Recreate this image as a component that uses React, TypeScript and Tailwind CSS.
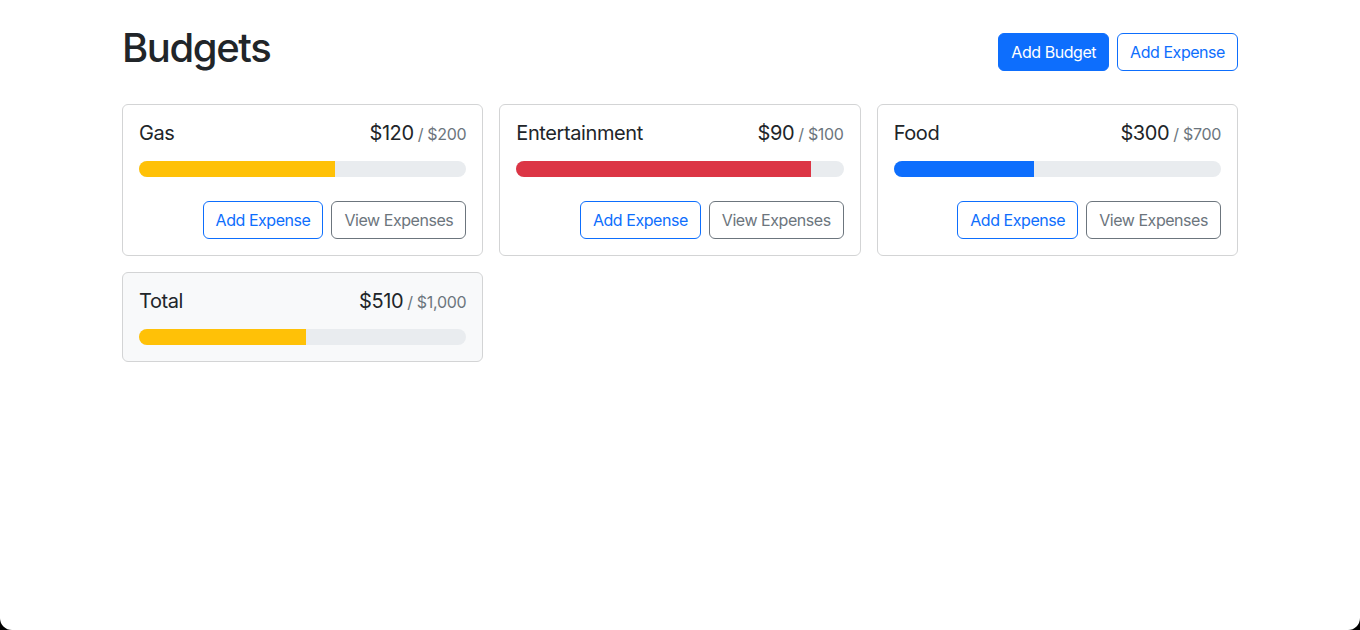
import React from "react";

type Budget = { name: string; amount: number; max: number };

const budgets: Budget[] = [
  { name: "Gas", amount: 120, max: 200 },
  { name: "Entertainment", amount: 90, max: 100 },
  { name: "Food", amount: 300, max: 700 },
];

const fmt = (n: number) => "$" + n.toLocaleString("en-US");

function barColor(ratio: number) {
  if (ratio < 0.5) return "bg-[#0d6efd]";
  if (ratio < 0.75) return "bg-[#ffc107]";
  return "bg-[#dc3545]";
}

function BudgetCard({
  b,
  gray,
  hideButtons,
}: {
  b: Budget;
  gray?: boolean;
  hideButtons?: boolean;
}) {
  const ratio = b.amount / b.max;
  return (
    <div
      className={`rounded-[6px] border border-[#d3d4d5] p-4 ${
        gray ? "bg-[#f8f9fa]" : "bg-white"
      }`}
    >
      <div className="mb-4 flex h-6 items-baseline justify-between overflow-visible text-[20px] leading-[24px] tracking-[-0.4px] text-[#212529]">
        <div className="mr-2">{b.name}</div>
        <div className="flex items-baseline">
          {fmt(b.amount)}
          <span className="ml-1 text-[16px] leading-[20px] tracking-[-0.3px] text-[#6c757d]">
            / {fmt(b.max)}
          </span>
        </div>
      </div>
      <div className="flex h-4 overflow-hidden rounded-full bg-[#e9ecef]">
        <div className={`h-full ${barColor(ratio)}`} style={{ width: `${ratio * 100}%` }} />
      </div>
      {!hideButtons && (
        <div className="mt-6 flex items-center gap-2">
          <button className="ml-auto rounded-[6px] border border-[#0d6efd] px-3 py-[6px] text-[16px] leading-[24px] tracking-[-0.45px] text-[#0d6efd]">
            Add Expense
          </button>
          <button className="rounded-[6px] border border-[#6c757d] px-3 py-[6px] text-[16px] leading-[24px] tracking-[-0.45px] text-[#6c757d]">
            View Expenses
          </button>
        </div>
      )}
    </div>
  );
}

export default function App() {
  return (
    <div className="h-[630px] bg-black">
      <div
        className="h-full overflow-hidden rounded-b-[12px] bg-white text-[#212529]"
        style={{ fontFamily: "Inter, 'Noto Sans', sans-serif" }}
      >
        <div className="mx-auto my-6 w-[1140px] px-3">
          <div className="mb-6 flex items-center gap-2">
            <h1 className="mr-auto mb-2 text-[40px] font-medium leading-[48px] tracking-[-1.4px]">
              Budgets
            </h1>
            <button className="rounded-[6px] border border-[#0d6efd] bg-[#0d6efd] px-3 py-[6px] text-[16px] leading-[24px] tracking-[-0.45px] text-white">
              Add Budget
            </button>
            <button className="rounded-[6px] border border-[#0d6efd] px-3 py-[6px] text-[16px] leading-[24px] tracking-[-0.45px] text-[#0d6efd]">
              Add Expense
            </button>
          </div>
          <div className="grid grid-cols-3 items-start gap-4">
            {budgets.map((b) => (
              <BudgetCard key={b.name} b={b} />
            ))}
            <BudgetCard b={{ name: "Total", amount: 510, max: 1000 }} gray hideButtons />
          </div>
        </div>
      </div>
    </div>
  );
}
